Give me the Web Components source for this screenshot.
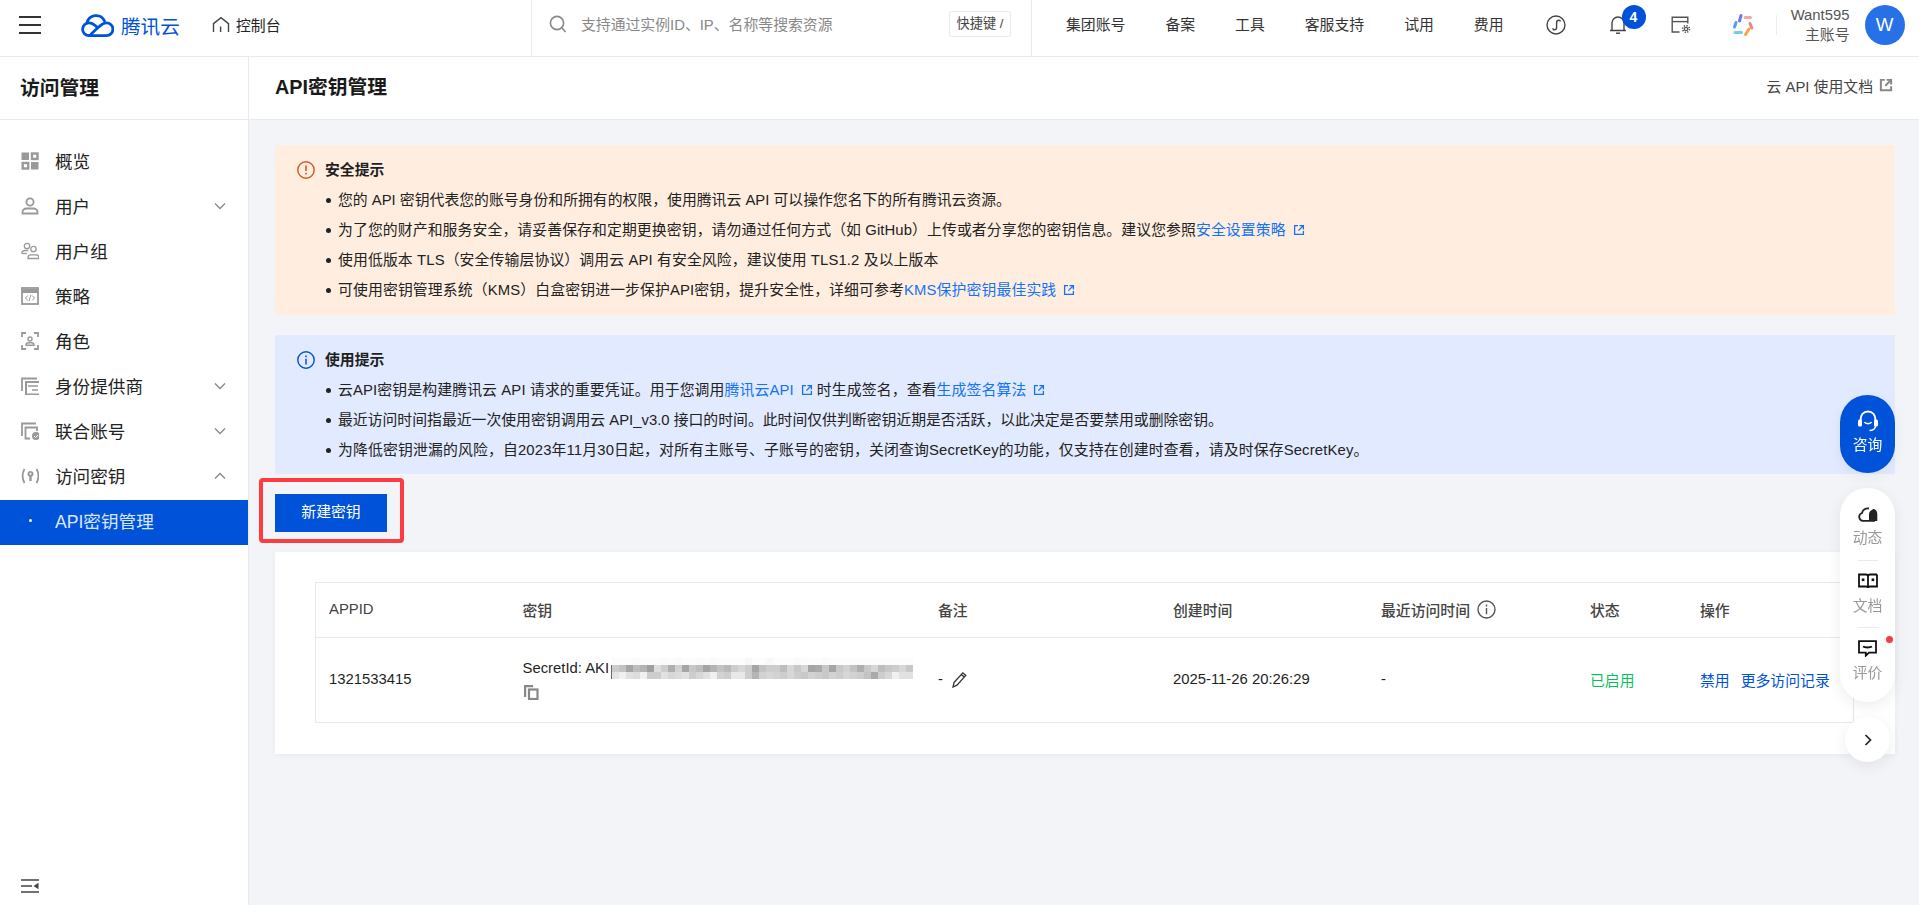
<!DOCTYPE html>
<html lang="zh-CN">
<head>
<meta charset="utf-8">
<title>API密钥管理</title>
<style>
html,body{margin:0;height:100%;overflow:hidden}
body{
  font-family:"Liberation Sans","Noto Sans CJK SC",sans-serif;
  font-size:14.85px;
  color:#1f1f1f;
  background:#f3f4f7;
  display:flex;
  flex-direction:column;
}
</style>
</head>
<body>
<top-bar></top-bar>
<app-shell>
  <side-nav slot="side"></side-nav>
  <page-head title="API密钥管理" doc="云 API 使用文档"></page-head>
  <page-body>
    <notice-box kind="warn" title="安全提示">
      <notice-line>您的 API 密钥代表您的账号身份和所拥有的权限，使用腾讯云 API 可以操作您名下的所有腾讯云资源。</notice-line>
      <notice-line style="letter-spacing:.1px">为了您的财产和服务安全，请妥善保存和定期更换密钥，请勿通过任何方式（如 GitHub）上传或者分享您的密钥信息。建议您参照<ext-link>安全设置策略</ext-link></notice-line>
      <notice-line style="letter-spacing:.12px">使用低版本 TLS（安全传输层协议）调用云 API 有安全风险，建议使用 TLS1.2 及以上版本</notice-line>
      <notice-line style="letter-spacing:.13px">可使用密钥管理系统（KMS）白盒密钥进一步保护API密钥，提升安全性，详细可参考<ext-link>KMS保护密钥最佳实践</ext-link></notice-line>
    </notice-box>
    <notice-box kind="info" title="使用提示">
      <notice-line style="letter-spacing:.13px">云API密钥是构建腾讯云 API 请求的重要凭证。用于您调用<ext-link>腾讯云API</ext-link>时生成签名，查看<ext-link>生成签名算法</ext-link></notice-line>
      <notice-line>最近访问时间指最近一次使用密钥调用云 API_v3.0 接口的时间。此时间仅供判断密钥近期是否活跃，以此决定是否要禁用或删除密钥。</notice-line>
      <notice-line style="letter-spacing:.15px">为降低密钥泄漏的风险，自2023年11月30日起，对所有主账号、子账号的密钥，关闭查询SecretKey的功能，仅支持在创建时查看，请及时保存SecretKey。</notice-line>
    </notice-box>
    <create-button>新建密钥</create-button>
    <key-table></key-table>
  </page-body>
</app-shell>
<float-tools></float-tools>

<script>
const EXT_ICON=`<svg width="12" height="12" viewBox="0 0 12 12" fill="none" stroke="currentColor" stroke-width="1.3"><path d="M5 1.6H1.6v8.8h8.8V7"/><path d="M6.5 1.6h3.9v3.9M10.2 1.8 5.4 6.6"/></svg>`

class TopBar extends HTMLElement{
  constructor(){
    super()
    const shadow=this.attachShadow({mode:"open"})
    shadow.innerHTML=`
    <style>
    :host{display:flex;height:56px;flex:none;background:#fff;border-bottom:1px solid #e8eaef;color:#333}
    .left{width:531px;flex:none;display:flex;align-items:center;height:50px}
    .burger{margin-left:19px;width:22px;height:18px;display:flex;flex-direction:column;justify-content:space-between}
    .burger i{display:block;height:2px;background:#333}
    .logo{display:flex;align-items:center;margin-left:39px;color:#0052d9;font-size:19.6px;gap:7px;width:100px}
    .home{display:flex;align-items:center;margin-left:32px;gap:6px;color:#222}
    .home span{padding-bottom:2px}
    .search{width:501px;flex:none;box-sizing:border-box;border-left:1px solid #e8eaef;border-right:1px solid #e8eaef;display:flex;align-items:center;height:56px;padding:0 20px 8px 17px;color:#888}
    .search svg{flex:none}
    .search span{margin-left:14px;flex:1;white-space:nowrap;padding-bottom:2px}
    .search kbd{font:inherit;font-size:13.2px;color:#444;border:1px solid #e8eaef;border-radius:2px;height:24px;line-height:24px;width:60px;text-align:center;flex:none;white-space:nowrap}
    .nav{display:flex;align-items:center;height:50px;white-space:nowrap;flex:1}
    .nav a{margin-left:40px;color:#333;padding-bottom:4px}
    .nav a:first-child{margin-left:34px}
    .tools{display:flex;align-items:center;margin-left:42px}
    .bell{position:relative;margin-left:43px;height:20px;width:18px}
    .bell b{position:absolute;left:13px;top:-10px;width:24px;height:24px;border-radius:50%;background:#0052d9;color:#fff;font-size:14px;line-height:24px;text-align:center}
    .sep{width:1px;height:20px;background:#eceef2;margin-left:20px}
    .user{margin-left:13px;width:60px;line-height:20px;color:#555;display:flex;flex-direction:column;align-items:flex-end}
    .avatar{margin-left:15px;width:40px;height:40px;border-radius:50%;background:#2670e8;color:#fff;font-size:18.7px;line-height:40px;text-align:center;flex:none}
    </style>
    <div class="left">
      <div class="burger"><i></i><i></i><i></i></div>
      <div class="logo">
        <svg width="34" height="25" viewBox="0 0 34 25" fill="none" stroke="#0052d9" stroke-width="2.8" stroke-linecap="round">
          <path d="M7 10.2A9.3 9.3 0 0 1 24.5 7.8"/>
          <path d="M9 22.6H26.5A6.4 6.4 0 0 0 26.5 9.8C22.6 9.8 20.4 12.4 17 15.6L11.2 21"/>
          <path d="M9 22.6A6.4 6.4 0 1 1 9 9.8C12 9.8 14.4 11.6 16.6 13.8"/>
        </svg>
        <span>腾讯云</span>
      </div>
      <div class="home">
        <svg width="18" height="18" viewBox="0 0 18 18" fill="none" stroke="#444" stroke-width="1.4"><path d="M1.5 16V7.6L9 1.6l7.5 6V16"/><path d="M8.6 16v-5.5"/></svg>
        <span>控制台</span>
      </div>
    </div>
    <div class="search">
      <svg width="18" height="18" viewBox="0 0 18 18" fill="none" stroke="#888" stroke-width="1.6"><circle cx="8" cy="8" r="6.6"/><path d="M12.8 12.8 16.6 17"/></svg>
      <span>支持通过实例ID、IP、名称等搜索资源</span>
      <kbd>快捷键 /</kbd>
    </div>
    <div class="nav">
      <a>集团账号</a><a>备案</a><a>工具</a><a>客服支持</a><a>试用</a><a>费用</a>
      <div class="tools">
        <svg width="20" height="20" viewBox="0 0 20 20" fill="none" stroke="#444" stroke-width="1.4"><circle cx="10" cy="10" r="9"/><path d="M13 5.200c-1.800 0-2.400 1-2.400 2.300v5c0 1.400-.8 2.300-2.200 2.300-.9 0-1.500-.6-1.500-1.500"/><path d="M13 5.200c.9 0 1.300.6 1.300 1.200"/></svg>
        <div class="bell">
          <svg width="18" height="20" viewBox="0 0 18 20" fill="none" stroke="#444" stroke-width="1.4"><path d="M1 15.500h16M3 15.500V8a6 6 0 0 1 12 0v7.500"/><path d="M7 18.200h4"/></svg>
          <b>4</b>
        </div>
        <svg style="margin-left:44px" width="20" height="18" viewBox="0 0 20 18" fill="none" stroke="#555" stroke-width="1.4"><path d="M8.500 16H1.200V1.200h15.600V7.500"/><path d="M1.200 5.600h15.600"/><circle cx="15" cy="13" r="3.400" stroke-dasharray="1.300 1.370" stroke-width="1.600"/><circle cx="15" cy="13" r="1.700" stroke-width="1.200"/></svg>
        <svg style="margin-left:41px" width="24" height="24" viewBox="0 0 24 24" fill="none" stroke-width="3" stroke-linecap="round">
          <path d="M9 2.500 7.500 8" stroke="#6a78f2"/><path d="M13 4.500h5.500" stroke="#f4a8a2"/><path d="M4 9.500 2.500 14" stroke="#4aa3f0"/><path d="M18 10.500l1.800 4.500" stroke="#f0837d"/><path d="M3 19.500h6.500" stroke="#6ccdf5"/><path d="M17 16l-3.500 5.500" stroke="#f5a34a"/>
        </svg>
        <div class="sep"></div>
        <div class="user"><span>Want595</span><span>主账号</span></div>
        <div class="avatar">W</div>
      </div>
    </div>`
  }
}
customElements.define("top-bar",TopBar)

class AppShell extends HTMLElement{
  constructor(){
    super()
    const shadow=this.attachShadow({mode:"open"})
    shadow.innerHTML=`
    <style>
    :host{display:flex;flex:1;min-height:0}
    .main{flex:1;min-width:0;display:flex;flex-direction:column}
    </style>
    <slot name="side"></slot>
    <div class="main"><slot></slot></div>`
  }
}
customElements.define("app-shell",AppShell)

const NAV_ICONS={
  grid:`<rect x="0.500" y="0.500" width="7.500" height="7.500" fill="#999"/><rect x="11" y="1.500" width="5.500" height="5.500" stroke="#999" stroke-width="2.400"/><rect x="1.700" y="11" width="5.500" height="5.500" stroke="#999" stroke-width="2.400"/><rect x="10" y="10" width="7.500" height="7.500" fill="#999"/>`,
  user:`<circle cx="9" cy="5" r="3.600" stroke="#999" stroke-width="1.800"/><path d="M1.500 16.500v-1.300c0-2.300 2-3.700 4-3.700h7c2 0 4 1.400 4 3.700v1.300z" stroke="#999" stroke-width="1.800"/>`,
  group:`<circle cx="6" cy="4" r="2.700" stroke="#999" stroke-width="1.300"/><path d="M.8 11.500c0-2 1.700-3 3.500-3h3" stroke="#999" stroke-width="1.300"/><path d="M.8 11.500h5" stroke="#999" stroke-width="1.300"/><circle cx="12.500" cy="7" r="2.700" stroke="#999" stroke-width="1.300"/><path d="M7 16.500v-.8c0-1.800 1.500-2.800 3-2.800h5c1.500 0 3 1 3 2.800v.8z" stroke="#999" stroke-width="1.300"/>`,
  policy:`<rect x="1" y="1" width="16" height="16" stroke="#999" stroke-width="1.800"/><path d="M1 4h16" stroke="#999" stroke-width="4"/><path d="M6.800 8.500 4.500 11l2.300 2.500M11.200 8.500 13.500 11l-2.300 2.500M9.900 8 8.100 14" stroke="#999" stroke-width="1"/>`,
  role:`<path d="M1 5V1h4M13 1h4v4M17 13v4h-4M5 17H1v-4" stroke="#999" stroke-width="1.800"/><circle cx="9" cy="7" r="2" stroke="#999" stroke-width="1.400"/><path d="M5 13.200c0-1.700 1.200-2.400 2.500-2.400h3c1.300 0 2.500.7 2.500 2.400z" stroke="#999" stroke-width="1.400"/>`,
  idp:`<path d="M1 14V1.500h15" stroke="#999" stroke-width="1.800"/><rect x="5" y="5" width="14" height="12.500" stroke="#999" stroke-width="2"/><path d="M7 9h10M11 13h6" stroke="#999" stroke-width="1.600"/>`,
  fed:`<path d="M1 14V1.500h14" stroke="#999" stroke-width="1.800"/><path d="M9 16.500H4.500V5.500H16V9" stroke="#999" stroke-width="1.800"/><circle cx="15" cy="14" r="4" fill="#999"/><path d="m13 14 1.500 1.500 2.500-2.500" stroke="#fff" stroke-width="1"/>`,
  key:`<path d="M3.500 2C1 6 1 12 3.500 16M15.500 2C18 6 18 12 15.500 16" stroke="#999" stroke-width="1.800"/><path d="M6.500 7a3 3 0 0 1 6 0c0 1.500-1 2.300-1.800 2.800V14H8.300V9.800C7.500 9.300 6.500 8.500 6.500 7z" fill="#999"/><circle cx="9.500" cy="6.800" r="1" fill="#fff"/>`
}

class NavItem extends HTMLElement{
  connectedCallback(){
    const shadow=this.shadowRoot||this.attachShadow({mode:"open"})
    const arrow=this.getAttribute('arrow')
    const icon=NAV_ICONS[this.getAttribute('icon')]
    shadow.innerHTML=`
    <style>
    :host{display:flex;align-items:center;height:45px;box-sizing:border-box;padding:0 22px 4px 21px;font-size:17.6px;color:#222}
    :host([active]){background:#0052d9;color:#d9e6ff}
    .ic{width:18px;height:18px;flex:none;margin-right:16px;display:flex;align-items:center;justify-content:center}
    .txt{flex:1;white-space:nowrap}
    .dot{width:3px;height:3px;border-radius:50%;background:#fff;margin-left:1px}
    </style>
    <span class="ic">${icon?`<svg width="18" height="18" viewBox="0 0 18 18" fill="none">${icon}</svg>`:'<i class="dot"></i>'}</span>
    <span class="txt"><slot></slot></span>
    ${arrow?`<svg width="12" height="8" viewBox="0 0 12 8" fill="none" stroke="#888" stroke-width="1.300"><path d="${arrow=='up'?'M1 6.500 6 1.500l5 5':'M1 1.500l5 5 5-5'}"/></svg>`:''}`
  }
}
customElements.define("nav-item",NavItem)

class SideNav extends HTMLElement{
  constructor(){
    super()
    const shadow=this.attachShadow({mode:"open"})
    shadow.innerHTML=`
    <style>
    :host{display:flex;flex-direction:column;width:249px;flex:none;box-sizing:border-box;background:#fff;border-right:1px solid #e8eaef}
    h2{margin:0;height:63px;line-height:62px;box-sizing:border-box;padding-left:20px;font-size:19.8px;font-weight:700;color:#1a1a1a;border-bottom:1px solid #e8eaef;flex:none}
    .list{padding-top:20px;flex:1}
    .foot{height:26px;padding-left:21px}
    </style>
    <h2>访问管理</h2>
    <div class="list">
      <nav-item icon="grid">概览</nav-item>
      <nav-item icon="user" arrow="down">用户</nav-item>
      <nav-item icon="group">用户组</nav-item>
      <nav-item icon="policy">策略</nav-item>
      <nav-item icon="role">角色</nav-item>
      <nav-item icon="idp" arrow="down">身份提供商</nav-item>
      <nav-item icon="fed" arrow="down">联合账号</nav-item>
      <nav-item icon="key" arrow="up">访问密钥</nav-item>
      <nav-item active>API密钥管理</nav-item>
    </div>
    <div class="foot">
      <svg width="18" height="14" viewBox="0 0 18 14" fill="none" stroke="#444" stroke-width="1.600"><path d="M0 1h18M0 13h18M0 7h11"/><path d="M17.500 3.800v6.400L12.500 7z" fill="#444" stroke="none"/></svg>
    </div>`
  }
}
customElements.define("side-nav",SideNav)

class PageHead extends HTMLElement{
  connectedCallback(){
    const shadow=this.shadowRoot||this.attachShadow({mode:"open"})
    shadow.innerHTML=`
    <style>
    :host{display:flex;align-items:center;justify-content:space-between;height:63px;flex:none;box-sizing:border-box;padding:0 26px 6px 26px;background:#fff;border-bottom:1px solid #e8eaef}
    h1{margin:0;font-size:19.8px;font-weight:700;color:#1a1a1a}
    a{display:flex;align-items:center;gap:6px;color:#444}
    svg{color:#888}
    </style>
    <h1>${this.getAttribute('title')}</h1>
    <a>${this.getAttribute('doc')}<svg width="14" height="14" viewBox="0 0 12 12" fill="none" stroke="currentColor" stroke-width="1.700"><path d="M5 1.600H1.600v8.800h8.800V7"/><path d="M6.500 1.600h3.900v3.900M10.200 1.800 5.400 6.600"/></svg></a>`
  }
}
customElements.define("page-head",PageHead)

class PageBody extends HTMLElement{
  constructor(){
    super()
    const shadow=this.attachShadow({mode:"open"})
    shadow.innerHTML=`
    <style>
    :host{display:flex;flex-direction:column;padding:25px 24px 0 26px;flex:1;min-height:0}
    </style>
    <slot></slot>`
  }
}
customElements.define("page-body",PageBody)

class NoticeBox extends HTMLElement{
  connectedCallback(){
    const shadow=this.shadowRoot||this.attachShadow({mode:"open"})
    const warn=this.getAttribute('kind')=='warn'
    const c=warn?'#d4581f':'#0052d9'
    const mark=warn
      ?`<path d="M9 4.500v5.500" stroke="${c}" stroke-width="1.600"/><path d="M9 11.800v1.800" stroke="${c}" stroke-width="1.600"/>`
      :`<path d="M9 4.400v1.800" stroke="${c}" stroke-width="1.500"/><path d="M9 7.800v5.800" stroke="${c}" stroke-width="1.500"/>`
    shadow.innerHTML=`
    <style>
    :host{display:block;background:${warn?'#ffeee0':'#e1eafe'};padding:15px 0 ${warn?9:8}px 22px;margin-bottom:20px;color:#222}
    .head{display:flex;align-items:center;gap:10px;height:20px;font-weight:700;color:#1f1f1f;margin-bottom:6px}
    .head span{position:relative;top:-2px}
    .list{display:flex;flex-direction:column}
    </style>
    <div class="head">
      <svg width="18" height="18" viewBox="0 0 18 18" fill="none"><circle cx="9" cy="9" r="8.200" stroke="${c}" stroke-width="1.400"/>${mark}</svg>
      <span>${this.getAttribute('title')}</span>
    </div>
    <div class="list"><slot></slot></div>`
  }
}
customElements.define("notice-box",NoticeBox)

class NoticeLine extends HTMLElement{
  constructor(){
    super()
    const shadow=this.attachShadow({mode:"open"})
    shadow.innerHTML=`
    <style>
    :host{display:flex;align-items:center;height:30px;box-sizing:border-box;padding:0 0 5px 29px;white-space:nowrap}
    i{width:5px;height:5px;border-radius:50%;background:#222;margin:3px 7px 0 0;flex:none}
    </style>
    <i></i><span><slot></slot></span>`
  }
}
customElements.define("notice-line",NoticeLine)

class ExtLink extends HTMLElement{
  constructor(){
    super()
    const shadow=this.attachShadow({mode:"open"})
    // no whitespace around the slot: this host is inline and a stray space would show
    shadow.innerHTML=`<style>:host{color:#1473f5}svg{margin:0 4px 0 7px;vertical-align:-1px}</style><slot></slot>${EXT_ICON}`
  }
}
customElements.define("ext-link",ExtLink)

class CreateButton extends HTMLElement{
  constructor(){
    super()
    const shadow=this.attachShadow({mode:"open"})
    shadow.innerHTML=`
    <style>
    :host{display:block;position:relative;width:112px;height:38px;flex:none;margin-bottom:20px}
    .btn{height:38px;line-height:37px;text-align:center;background:#0052d9;color:#fff}
    .mark{position:absolute;left:-16px;top:-16px;width:145px;height:65px;box-sizing:border-box;border:4px solid #fb3c40;border-radius:4px}
    </style>
    <div class="btn"><slot></slot></div>
    <div class="mark"></div>`
  }
}
customElements.define("create-button",CreateButton)

class MosaicStrip extends HTMLElement{
  constructor(){
    super()
    const shadow=this.attachShadow({mode:"open"})
    const levels=[
      [252,252,252,250,252,252,252,250,252,250,252,252,250,252,250,252,252,252,252,247,252,252,248,252,252,252,250,252,252,252,250,252,252,252,252,252,252,252,252,252,252,252,252],
      [205,195,165,190,180,160,222,205,175,210,165,200,190,165,180,195,185,205,215,205,165,195,205,205,190,215,200,215,165,170,200,165,200,210,195,175,200,215,190,200,205,215,200],
      [228,240,225,220,240,205,205,225,215,220,225,205,215,225,240,210,205,232,232,205,180,210,215,210,205,215,205,200,210,205,200,210,205,215,210,205,195,170,205,215,240,225,225]
    ]
    let rects=''
    levels.forEach((row,y)=>row.forEach((v,x)=>{
      rects+=`<rect x="${x*7}" y="${y*7}" width="7" height="7" fill="rgb(${v},${v},${v})"/>`
    }))
    shadow.innerHTML=`
    <style>:host{display:inline-block;width:300px;height:21px;line-height:0;box-sizing:content-box}svg{filter:blur(.6px)}
    i{position:absolute;left:-1px;top:7px;width:1px;height:14px;background:#7a6355}</style>
    <i></i><svg width="301" height="21" viewBox="0 0 301 21" shape-rendering="crispEdges">${rects}</svg>`
  }
}
customElements.define("mosaic-strip",MosaicStrip)

class KeyTable extends HTMLElement{
  constructor(){
    super()
    const shadow=this.attachShadow({mode:"open"})
    shadow.innerHTML=`
    <style>
    :host{display:block;background:#fff;height:202px;box-sizing:border-box;padding:30px 41px 0 40px;box-shadow:0 1px 6px rgba(40,50,80,.05)}
    .grid{display:grid;grid-template-columns:193.500px 415.500px 235px 208px 209px 110px 1fr;border:1px solid #e6e8ed;height:141px;box-sizing:border-box;grid-template-rows:55px 1fr;background:#fff}
    .grid>div{padding-left:13px;display:flex;align-items:center;white-space:nowrap}
    .th{color:#444;font-weight:500;border-bottom:1px solid #e6e8ed;padding-bottom:2px}
    .td{color:#1f1f1f;padding-bottom:2px}
    .secret{flex-direction:column;align-items:flex-start!important;padding-top:18px}
    .sid{display:flex;height:21px;align-items:flex-end;position:relative;line-height:17px}
    .sid mosaic-strip{position:absolute;left:89.500px;top:2px}
    .copy{margin:8px 0 0 1px}
    .ok{color:#0abf5b}
    .ops{color:#0052d9;gap:11px}
    .lead{gap:7px}
    </style>
    <div class="grid">
      <div class="th">APPID</div>
      <div class="th">密钥</div>
      <div class="th">备注</div>
      <div class="th">创建时间</div>
      <div class="th lead">最近访问时间
        <svg width="19" height="19" viewBox="0 0 19 19" fill="none" stroke="#555" stroke-width="1.400"><circle cx="9.500" cy="9.500" r="8.500"/><path d="M9.500 4.600v1.800M9.500 8v6.200"/></svg>
      </div>
      <div class="th">状态</div>
      <div class="th">操作</div>
      <div class="td">1321533415</div>
      <div class="td secret">
        <div class="sid"><span>SecretId: AKI</span><mosaic-strip></mosaic-strip></div>
        <svg class="copy" width="15" height="15" viewBox="0 0 15 15" fill="none" stroke="#888" stroke-width="2.200"><path d="M1.100 12V1.100h8"/><rect x="5" y="4.500" width="8.500" height="9.500"/></svg>
      </div>
      <div class="td" style="gap:8px">-
        <svg width="17" height="17" viewBox="0 0 17 17" fill="none" stroke="#333" stroke-width="1.300"><path d="M3 11.500 11.800 1.800l3 2.600L6 14.200 2 16z"/><path d="m10.300 3.500 3 2.600"/></svg>
      </div>
      <div class="td">2025-11-26 20:26:29</div>
      <div class="td">-</div>
      <div class="td ok">已启用</div>
      <div class="td ops"><span>禁用</span><span>更多访问记录</span></div>
    </div>`
  }
}
customElements.define("key-table",KeyTable)

class FloatTools extends HTMLElement{
  constructor(){
    super()
    const shadow=this.attachShadow({mode:"open"})
    shadow.innerHTML=`
    <style>
    :host{position:fixed;left:1840px;top:395px;width:55px;display:flex;flex-direction:column;align-items:center}
    .consult{width:55px;height:78px;border-radius:27.500px;background:#0052d9;color:#fff;display:flex;flex-direction:column;align-items:center;padding-top:15px;box-sizing:border-box;box-shadow:0 4px 14px rgba(40,50,80,.06);gap:1px}
    .panel{width:55px;height:214px;margin-top:15px;border-radius:27.500px;background:#fff;box-shadow:0 4px 14px rgba(40,50,80,.09);color:#999;display:flex;flex-direction:column;align-items:center;box-sizing:border-box;padding-top:17px}
    .it{display:flex;flex-direction:column;align-items:center;gap:8px;position:relative;line-height:17px}
    hr{width:20px;border:0;border-top:1px solid #e8eaef;margin:13px 0 12px}
    .dot{position:absolute;left:33px;top:-4px;width:7px;height:7px;border-radius:50%;background:#fa3b42}
    .more{width:45px;height:45px;margin-top:15px;border-radius:50%;background:#fff;box-shadow:0 4px 14px rgba(40,50,80,.09);display:flex;align-items:center;justify-content:center}
    </style>
    <div class="consult">
      <svg width="22" height="22" viewBox="0 0 22 22" fill="none" stroke="#fff"><path d="M3.500 10.500C3.500 5 6.500 1.500 11 1.500s7.500 3.500 7.500 9" stroke-width="2"/><rect x="1" y="9.500" width="4" height="7" rx="1.500" fill="#fff" stroke="none"/><rect x="17" y="9.500" width="4" height="7" rx="1.500" fill="#fff" stroke="none"/><path d="M7.500 12c1 2.200 6 2.200 7 0" stroke-width="1.600"/><path d="M18.500 16c0 3-3 4.500-6 4.500" stroke-width="1.600"/></svg>
      <span>咨询</span>
    </div>
    <div class="panel">
      <div class="it" style="gap:7px">
        <svg width="20" height="18" viewBox="0 0 20 18" fill="none" stroke="#222" stroke-width="1.800"><path d="M7 15.800H5a4 4 0 0 1-1-7.800 6 6 0 0 1 7-4.500M7 15.800h10"/><path d="M11 16V9.500c0-2.500 1.500-4 3-4.500a2 2 0 0 1 3.500 0c1 .5 1.800 2 1.800 4.500v6.500z" fill="#222" stroke="none"/></svg>
        <span>动态</span>
      </div>
      <hr>
      <div class="it">
        <svg width="20" height="17" viewBox="0 0 20 17" fill="none" stroke="#111" stroke-width="1.800"><path d="M1 1.500h7c1.200 0 2 .8 2 2v11.500c0-.8-.8-1.500-2-1.500H1zM19 1.500h-7c-1.200 0-2 .8-2 2"/><path d="M19 1.500v12h-7c-1.200 0-2 .7-2 1.500"/><rect x="3.800" y="5.500" width="2.600" height="2.600" fill="#111" stroke="none"/><rect x="13.600" y="5.500" width="2.600" height="2.600" fill="#111" stroke="none"/></svg>
        <span>文档</span>
      </div>
      <hr style="margin-top:12px">
      <div class="it">
        <i class="dot"></i>
        <svg width="19" height="17" viewBox="0 0 19 17" fill="none" stroke="#111" stroke-width="1.800"><path d="M1 1.200h17v11.500H11l-3.200 3v-3H1z"/><path d="M5 6.500c2 1.300 7 1.300 9 0"/></svg>
        <span>评价</span>
      </div>
    </div>
    <div class="more">
      <svg width="8" height="12" viewBox="0 0 8 12" fill="none" stroke="#222" stroke-width="1.700"><path d="m1.500 1 5 5-5 5"/></svg>
    </div>`
  }
}
customElements.define("float-tools",FloatTools)
</script>
</body>
</html>
